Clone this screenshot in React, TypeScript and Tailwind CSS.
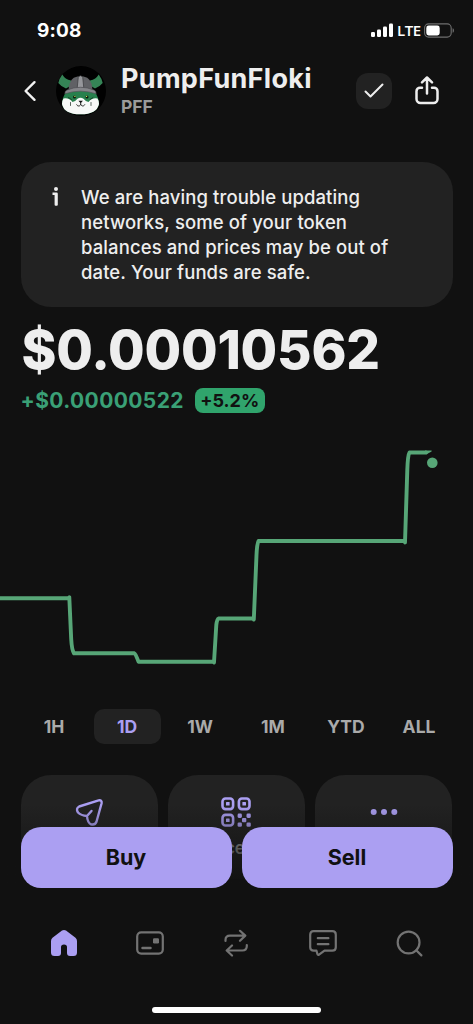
import type { ReactNode } from 'react';
import clsx from 'clsx';

const RANGES = ['1H', '1D', '1W', '1M', 'YTD', 'ALL'];

function StatusBar() {
    return (
        <div className="flex h-[60px] shrink-0 items-center justify-between pl-[37px] pr-[18px] text-white">
            <span className="text-[19px] font-bold leading-none tracking-[0.2px]">9:08</span>
            <div className="flex items-center">
                <svg className="h-[14px] w-[22px]" viewBox="0 0 22 14" fill="currentColor">
                    <rect x="0" y="9" width="4" height="5" rx="1.2" />
                    <rect x="6" y="6.5" width="4" height="7.5" rx="1.2" />
                    <rect x="12" y="3.5" width="4" height="10.5" rx="1.2" />
                    <rect x="18" y="0.5" width="4" height="13.5" rx="1.2" />
                </svg>
                <span className="ml-[4px] w-[24px] font-['Open_Sans',sans-serif] text-[15px] font-semibold leading-none tracking-[-0.5px]">LTE</span>
                <svg className="ml-[3px] h-[15px] w-[31px]" viewBox="0 0 31 15">
                    <rect x="0.6" y="0.9" width="26.6" height="13.2" rx="4" fill="none" stroke="#6f6f6f" strokeWidth="1.1" />
                    <rect x="2.3" y="2.6" width="13.4" height="9.8" rx="2.4" fill="#fff" />
                    <path d="M28.6 5.2c1.8.5 1.8 4.1 0 4.6z" fill="#6f6f6f" />
                </svg>
            </div>
        </div>
    );
}

function FlokiAvatar() {
    return (
        <svg className="h-[50px] w-[50px] shrink-0" viewBox="0 0 50 50">
            <circle cx="25" cy="25" r="25" fill="#010101" />
            {/* horns */}
            <path d="M6.3 8.6Q3 13 2.3 17Q5 20.5 10 22.5L15 19.5V14.5Q9 13.5 6.3 8.6z" fill="#358456" />
            <path d="M42.7 8.6Q46 13 46.7 17Q44 20.5 39 22.5L34 19.5V14.5Q40 13.5 42.7 8.6z" fill="#358456" />
            {/* head */}
            <path d="M10.5 25Q6 32 6 38Q8 48.3 24.5 48.3T43 38Q43 32 38.5 25z" fill="#27804d" />
            <path d="M7.5 32.5Q13 31.5 16.5 36Q19.5 35.5 21.5 32.8Q24.5 30.8 27.5 32.8Q29.5 35.5 32.5 36Q36 31.5 41.5 32.5Q43 34.5 43 38Q41 48.3 24.5 48.3T6 38Q6 34.5 7.5 32.5z" fill="#f7f8f7" />
            {/* helmet */}
            <path d="M12.5 23.5Q13 12 21.5 10.6H27.5Q36 12 36.5 23.5z" fill="#606165" />
            <path d="M22.3 11.3Q24.5 8 26.7 11.3L27.8 22H21.2z" fill="#96979b" stroke="#37383b" strokeWidth=".7" />
            <path d="M8.8 27.8Q8.8 24.8 11 24Q24.5 18.5 38 24Q40.2 24.8 40.2 27.8Q24.5 22.5 8.8 27.8z" fill="#85868a" stroke="#4b4c50" strokeWidth=".6" />
            {/* face */}
            <circle cx="18.5" cy="31" r="1.5" fill="#0c1a11" />
            <circle cx="31" cy="31" r="1.5" fill="#0c1a11" />
            <circle cx="18.9" cy="30.4" r=".6" fill="#d8ef5a" />
            <circle cx="30.6" cy="30.4" r=".6" fill="#d8ef5a" />
            <path d="M22.5 34.8h4.4l-2.2 2.4z" fill="#111" />
            <path d="M24.7 37v1.5c-.8 2-3.2 2-4 .3M24.7 38.5c.8 2 3.2 2 4 .3" fill="none" stroke="#111" strokeWidth=".9" strokeLinecap="round" />
            <path d="M12.5 31.5l3 2M37 31.5l-3 2M14.5 36.5v3M35 36.5v3" fill="none" stroke="#17291e" strokeWidth=".7" strokeLinecap="round" />
        </svg>
    );
}

function Header() {
    return (
        <header className="flex h-[62px] shrink-0 items-center pl-[23px] pr-[33px]">
            <svg className="h-[22px] w-[14px] shrink-0" viewBox="0 0 14 22" fill="none" stroke="#f2f2f2" strokeWidth="2.4" strokeLinecap="round" strokeLinejoin="round">
                <path d="M11.5 2.2 2.6 11l8.9 8.8" />
            </svg>
            <div className="ml-[19px] flex">
                <FlokiAvatar />
            </div>
            <div className="ml-[15px] flex-1">
                <h1 className="text-[27px] font-bold leading-[31px] tracking-[0.3px] text-[#eeeeee]">PumpFunFloki</h1>
                <p className="text-[17.5px] font-bold leading-[25px] text-[#9b9b9b]">PFF</p>
            </div>
            <div className="flex h-[36px] w-[36px] items-center justify-center rounded-[12px] bg-[#222222]">
                <svg className="h-[16px] w-[20px]" viewBox="0 0 20 16" fill="none" stroke="#eeeeee" strokeWidth="2" strokeLinecap="round" strokeLinejoin="round">
                    <path d="m1.5 8.5 5 5L18.5 1.5" />
                </svg>
            </div>
            <svg className="ml-[22px] h-[30px] w-[26px]" viewBox="0 0 26 30" fill="none" stroke="#eeeeee" strokeWidth="2.5" strokeLinecap="round" strokeLinejoin="round">
                <path d="M8 11.7H6a3.5 3.5 0 0 0-3.5 3.5v7.8A4 4 0 0 0 6.5 27h13a4 4 0 0 0 4-4v-7.8a3.5 3.5 0 0 0-3.5-3.5h-2M13 17.5V2M8 6.3 13 1.5l5 4.8" />
            </svg>
        </header>
    );
}

function Notice() {
    return (
        <div className="mx-[20.5px] mt-[40px] flex h-[145px] shrink-0 rounded-[30px] bg-[#222222] pl-[31px] pt-[23px]">
            <svg className="mt-[2px] h-[19px] w-[8px]" viewBox="0 0 8 19" fill="#eeeeee">
                <circle cx="4" cy="2" r="2" />
                <path d="M.5 5.5H4.5Q5.8 5.5 5.8 6.8V17.8Q5.8 18.8 4.8 18.8H3.6Q2.6 18.8 2.6 17.8V8H.5z" />
            </svg>
            <p className="ml-[21.5px] whitespace-nowrap text-[18.5px] font-medium leading-[25px] tracking-[0.1px] text-[#eeeeee]">
                We are having trouble updating<br />
                networks, some of your token<br />
                balances and prices may be out of<br />
                date. Your funds are safe.
            </p>
        </div>
    );
}

function PriceChart() {
    return (
        <svg className="mt-[27px] h-[240px] w-full shrink-0" viewBox="0 0 473 240" fill="none">
            <path
                d="M-2 158.2H68.5L69.3 157.3L71.2 199Q71.8 210 74 213.3H134.5Q135.5 213.5 138.5 221.7H213.5L214 222.5L216.3 185Q217 179 218.500 178.500H253L253.8 179.5L256.5 115Q257 104 258.5 101H404.5L405 102.5L407.3 30Q407.8 15 409.5 12.5H426"
                stroke="#57a677"
                strokeWidth="3.9"
                strokeLinecap="round"
                strokeLinejoin="round"
            />
            <path d="M425 10.6h6.5c.6.6 0 1.200-.8 1.400l-4.700 2.400z" fill="#57a677" />
            <circle cx="432.3" cy="22.8" r="5.3" fill="#57a677" />
        </svg>
    );
}

function RangeTabs() {
    return (
        <div className="mx-[20.5px] mt-[29px] grid h-[35px] shrink-0 grid-cols-6 gap-[6px]">
            {RANGES.map((range) => (
                <button
                    key={range}
                    className={clsx(
                        'flex items-center justify-center rounded-[10px] pt-[1px] text-[17.5px] font-bold',
                        range === '1D' ? 'bg-[#222222] text-[#ab9ff2]' : 'text-[#aaaaaa]'
                    )}
                >
                    {range}
                </button>
            ))}
        </div>
    );
}

function ActionCard({ label, children }: { label: string; children: ReactNode }) {
    return (
        <div className="flex h-[104px] flex-col items-center rounded-[30px] bg-[#222222] pt-[22px]">
            <div className="flex h-[30px] items-center justify-center text-[#ab9ff2]">{children}</div>
            <span className="mt-[9px] text-[17px] font-semibold leading-[24px] text-[#aaaaaa]">{label}</span>
        </div>
    );
}

function Actions() {
    return (
        <div className="mx-[20.5px] mt-[31px] grid shrink-0 grid-cols-3 gap-[10px]">
            <ActionCard label="Send">
                <svg className="h-[30px] w-[30px]" viewBox="0 0 30 30" fill="none" stroke="currentColor" strokeWidth="2.4" strokeLinecap="round" strokeLinejoin="round">
                    <path d="M5.2 9.5 24.6 3.4Q28.2 2.8 27.6 6.3L22.5 24.8Q21 28.5 17 27.3Q13.5 25.8 13 19Q7 18.5 4 15.5Q1.5 11.5 5.2 9.5zM13 19l4.5-5" />
                </svg>
            </ActionCard>
            <ActionCard label="Receive">
                <svg className="h-[30px] w-[30px]" viewBox="0 0 30 30" fill="none" stroke="currentColor" strokeWidth="2.6">
                    <rect x="1.5" y="1.5" width="10.6" height="10.6" rx="3" />
                    <rect x="17.9" y="1.5" width="10.6" height="10.6" rx="3" />
                    <rect x="1.5" y="17.9" width="10.6" height="10.6" rx="3" />
                    <g fill="currentColor" stroke="none">
                        <rect x="5" y="5" width="3.6" height="3.6" rx=".5" />
                        <rect x="21.4" y="5" width="3.6" height="3.6" rx=".5" />
                        <rect x="5" y="21.4" width="3.6" height="3.6" rx=".5" />
                        <rect x="16.6" y="16.6" width="4.3" height="4.3" rx="1.3" />
                        <rect x="25.5" y="16.6" width="4.3" height="4.3" rx="1.3" />
                        <rect x="21" y="21" width="4.3" height="4.3" rx="1" />
                        <rect x="16.6" y="25.5" width="4.3" height="4.3" rx="1.3" />
                        <rect x="25.5" y="25.5" width="4.3" height="4.3" rx="1.3" />
                    </g>
                </svg>
            </ActionCard>
            <ActionCard label="More">
                <svg className="h-[8px] w-[28px]" viewBox="0 0 28 8" fill="currentColor">
                    <circle cx="3.7" cy="4" r="3" />
                    <circle cx="14" cy="4" r="3" />
                    <circle cx="24.3" cy="4" r="3" />
                </svg>
            </ActionCard>
        </div>
    );
}

function TradeBar() {
    return (
        <div className="absolute inset-x-0 top-[795px] flex h-[92px] gap-[10px] bg-linear-to-b from-[#111111]/0 from-10% to-[#111111] px-[20.5px] pt-[32px] text-[21.5px] font-bold text-[#111111]">
            <button className="h-[60.5px] flex-1 rounded-[20px] bg-[#ab9ff2]">Buy</button>
            <button className="h-[60.5px] flex-1 rounded-[20px] bg-[#ab9ff2]">Sell</button>
        </div>
    );
}

function TabBar() {
    return (
        <nav className="mt-[34px] grid h-[60px] shrink-0 grid-cols-5 px-[20.5px] text-[#737373]">
            <div className="flex items-center justify-center">
                <svg className="h-[28px] w-[28px]" viewBox="0 0 28 28" fill="#ab9ff2">
                    <path d="M12 1.6Q14 .2 16 1.6L25.5 8.8Q27 10 27 12V23.5Q27 27 23.5 27H20Q17 27 17 24V18Q17 15.5 14 15.5T11 18V24Q11 27 8 27H4.5Q1 27 1 23.5V12Q1 10 2.5 8.8z" />
                </svg>
            </div>
            <div className="flex items-center justify-center">
                <svg className="h-[24px] w-[28px]" viewBox="0 0 28 24" fill="none" stroke="currentColor" strokeWidth="2.2">
                    <rect x="1.2" y="1.4" width="25.6" height="21.2" rx="4" />
                    <path d="M6.5 17h8" strokeWidth="2.5" strokeLinecap="round" />
                    <rect x="17" y="7.2" width="6" height="5.2" rx="1.2" fill="currentColor" stroke="none" />
                </svg>
            </div>
            <div className="flex items-center justify-center">
                <svg className="h-[28px] w-[24px]" viewBox="0 0 24 28" fill="none" stroke="currentColor" strokeWidth="2.2" strokeLinecap="round" strokeLinejoin="round">
                    <path d="M1.5 12v-1Q1.5 6.6 6 6.6H21M16 1.8 21.3 6.6 16 11.8M22.8 16v1q0 4.5-4.5 4.5H3M8 16.5 2.7 21.5 8 26.5" />
                </svg>
            </div>
            <div className="flex items-center justify-center">
                <svg className="h-[26px] w-[28px]" viewBox="0 0 28 26" fill="none" stroke="currentColor" strokeWidth="2.2" strokeLinecap="round" strokeLinejoin="round">
                    <path d="M4.7 1.2h18.6q3.5 0 3.5 3.5v12.5q0 3.5-3.5 3.5H15.5L10 24.7Q8.8 25.3 8.4 24L7.5 20.7H4.7Q1.2 20.7 1.2 17.2V4.7Q1.2 1.2 4.7 1.2zM8.8 8.2h10.6M8.8 14.2h10.6" />
                </svg>
            </div>
            <div className="flex items-center justify-center">
                <svg className="h-[27px] w-[27px]" viewBox="0 0 27 27" fill="none" stroke="currentColor" strokeWidth="2.2" strokeLinecap="round">
                    <circle cx="12.6" cy="12.5" r="10.9" />
                    <path d="m20.2 20.2 5.2 5.2" />
                </svg>
            </div>
        </nav>
    );
}

export default function App() {
    return (
        <div className="relative flex h-[1024px] w-[473px] flex-col overflow-hidden bg-[#111111] font-['Inter',sans-serif]">
            <StatusBar />
            <Header />
            <Notice />
            <div className="ml-[21.5px] mt-[12px] h-[63px] shrink-0 text-[53px] font-extrabold leading-[63px] tracking-[-0.2px] text-[#eeeeee]">
                $0.00010562
            </div>
            <div className="ml-[20.5px] mt-[6px] flex h-[25px] shrink-0 items-center">
                <span className="w-[174px] pt-[1px] text-[21px] font-bold tracking-[0.4px] text-[#3aa076]">+$0.00000522</span>
                <span className="flex h-[25px] w-[70.5px] items-center justify-center rounded-[8px] bg-[#30a46c] text-[18px] font-bold text-[#111111]">
                    +5.2%
                </span>
            </div>
            <PriceChart />
            <RangeTabs />
            <Actions />
            <TabBar />
            <div className="mx-auto mt-[34px] h-[6px] w-[169px] shrink-0 rounded-full bg-white" />
            <TradeBar />
        </div>
    );
}
